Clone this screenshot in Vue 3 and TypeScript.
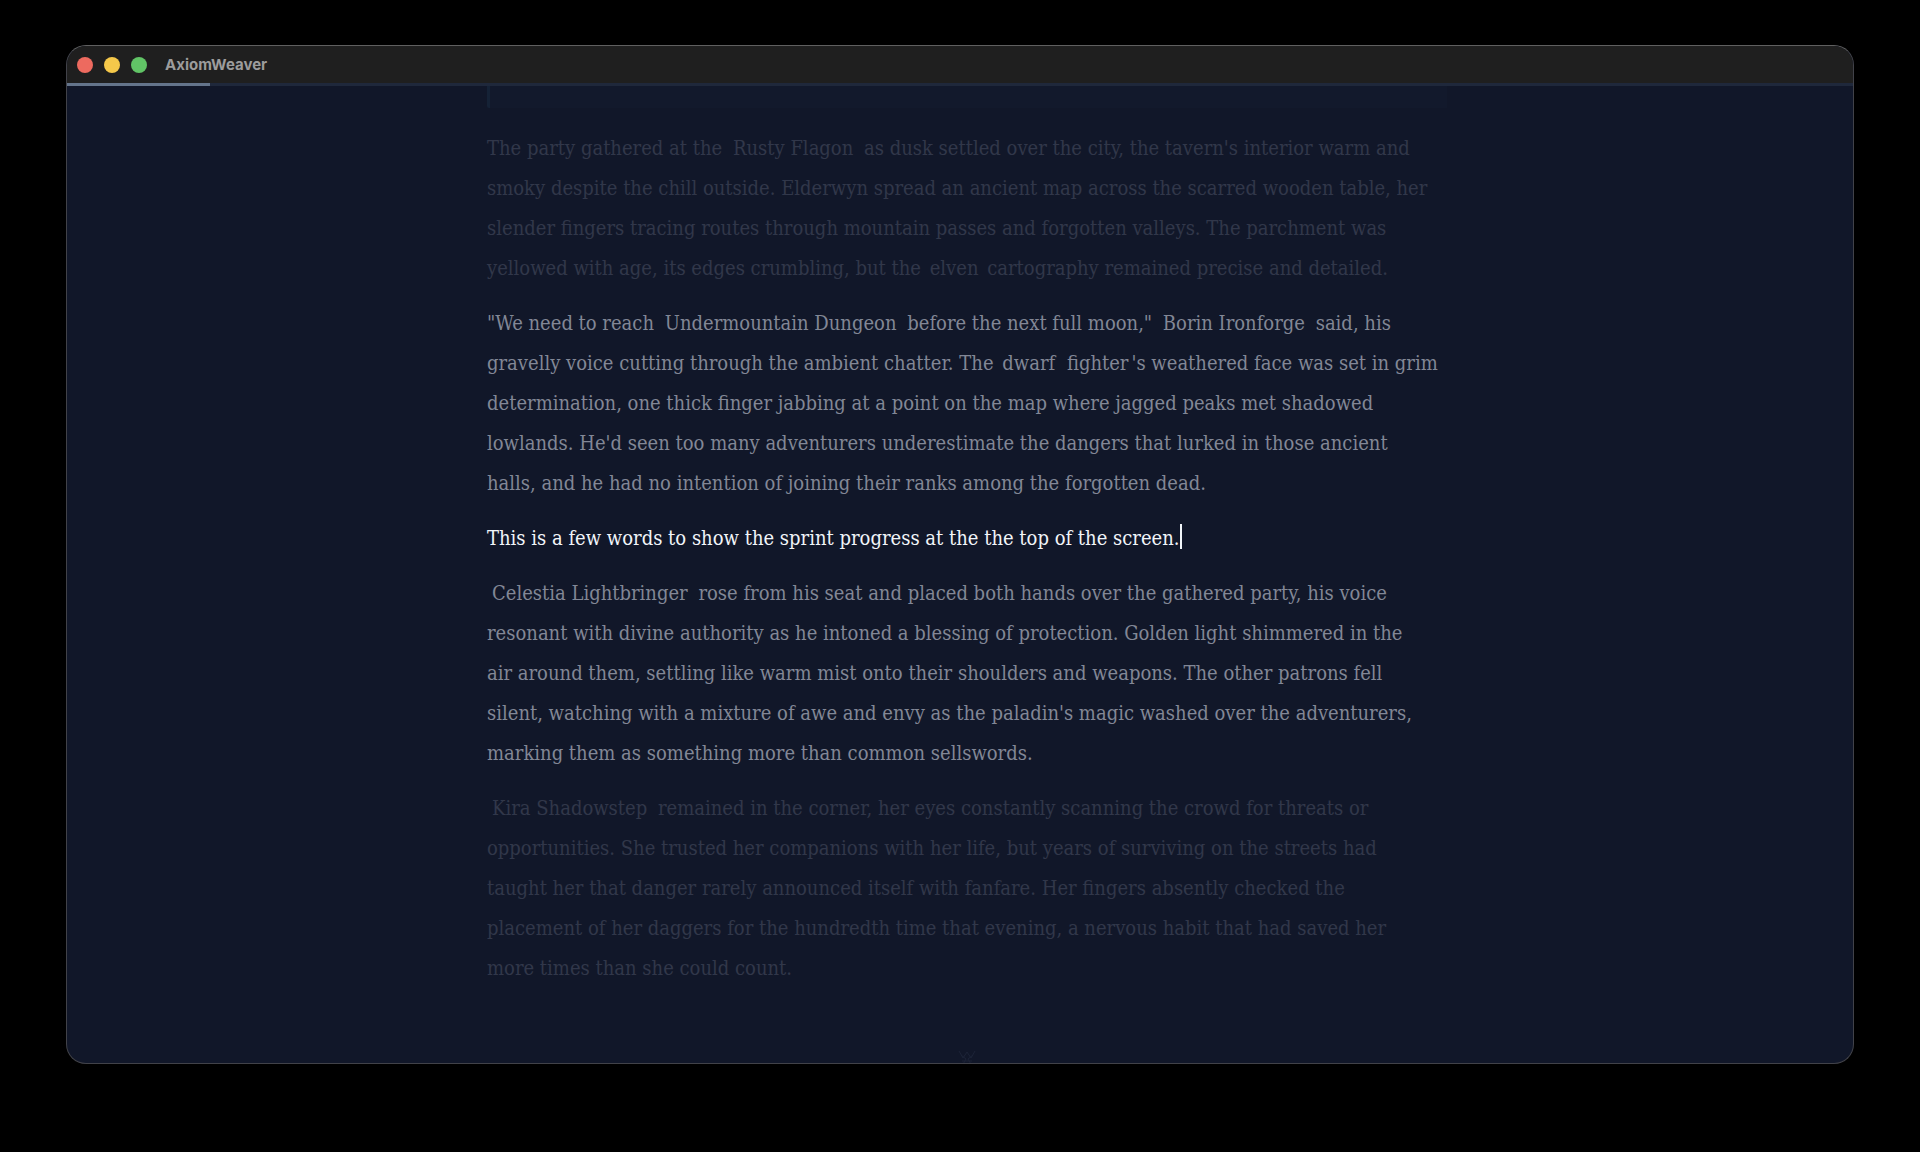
<script setup lang="ts">
type Kind = 'text' | 'name' | 'trait'

interface Segment {
  kind: Kind
  text: string
}

interface Paragraph {
  focus: 'active' | 'near' | 'far'
  lines: Segment[][]
}

// Linked names are written as [[name]], character traits as <<trait>>.
function parse(line: string): Segment[] {
  return line
    .split(/(\[\[.*?\]\]|<<.*?>>)/)
    .filter((part) => part.length > 0)
    .map((part): Segment => {
      if (part.startsWith('[[')) return { kind: 'name', text: part.slice(2, -2) }
      if (part.startsWith('<<')) return { kind: 'trait', text: part.slice(2, -2) }
      return { kind: 'text', text: part }
    })
}

const sprintProgress = 8

const paragraphs: Paragraph[] = [
  {
    focus: 'far',
    lines: [
      "The party gathered at the [[Rusty Flagon]] as dusk settled over the city, the tavern's interior warm and",
      'smoky despite the chill outside. Elderwyn spread an ancient map across the scarred wooden table, her',
      'slender fingers tracing routes through mountain passes and forgotten valleys. The parchment was',
      'yellowed with age, its edges crumbling, but the <<elven>> cartography remained precise and detailed.',
    ].map(parse),
  },
  {
    focus: 'near',
    lines: [
      '"We need to reach [[Undermountain Dungeon]] before the next full moon," [[Borin Ironforge]] said, his',
      "gravelly voice cutting through the ambient chatter. The <<dwarf>> <<fighter>>'s weathered face was set in grim",
      'determination, one thick finger jabbing at a point on the map where jagged peaks met shadowed',
      "lowlands. He'd seen too many adventurers underestimate the dangers that lurked in those ancient",
      'halls, and he had no intention of joining their ranks among the forgotten dead.',
    ].map(parse),
  },
  {
    focus: 'active',
    lines: ['This is a few words to show the sprint progress at the the top of the screen.'].map(parse),
  },
  {
    focus: 'near',
    lines: [
      '[[Celestia Lightbringer]] rose from his seat and placed both hands over the gathered party, his voice',
      'resonant with divine authority as he intoned a blessing of protection. Golden light shimmered in the',
      'air around them, settling like warm mist onto their shoulders and weapons. The other patrons fell',
      "silent, watching with a mixture of awe and envy as the paladin's magic washed over the adventurers,",
      'marking them as something more than common sellswords.',
    ].map(parse),
  },
  {
    focus: 'far',
    lines: [
      '[[Kira Shadowstep]] remained in the corner, her eyes constantly scanning the crowd for threats or',
      'opportunities. She trusted her companions with her life, but years of surviving on the streets had',
      'taught her that danger rarely announced itself with fanfare. Her fingers absently checked the',
      'placement of her daggers for the hundredth time that evening, a nervous habit that had saved her',
      'more times than she could count.',
    ].map(parse),
  },
]
</script>

<template>
  <div class="desktop">
    <div class="window">
      <header class="titlebar">
        <button class="light close" type="button" aria-label="Close"></button>
        <button class="light minimize" type="button" aria-label="Minimize"></button>
        <button class="light zoom" type="button" aria-label="Zoom"></button>
        <h1 class="title">AxiomWeaver</h1>
      </header>
      <div class="workspace">
        <div class="sprint">
          <div class="sprint-fill" :style="{ width: sprintProgress + '%' }"></div>
        </div>
        <main class="page">
          <blockquote class="quote"></blockquote>
          <p v-for="(p, i) in paragraphs" :key="i" class="para" :class="p.focus">
            <span v-for="(line, j) in p.lines" :key="j" class="line"
              ><span v-for="(seg, k) in line" :key="k" :class="seg.kind">{{ seg.text }}</span
              ><span v-if="p.focus === 'active'" class="caret"></span
            ></span>
          </p>
          <svg class="ornament" viewBox="0 0 18 18" aria-hidden="true">
            <path d="M1 1 5 8 9 2 13 8 17 1M3 5l5 4-4 7M15 5l-5 4 4 7M4 11h10" />
          </svg>
        </main>
      </div>
    </div>
  </div>
</template>

<style>
body {
  background: #000;
}
</style>

<style scoped>
.desktop {
  box-sizing: border-box;
  height: 100vh;
  padding: 45px 66px 88px;
  background: #000;
}

.window {
  box-sizing: border-box;
  height: 100%;
  display: flex;
  flex-direction: column;
  overflow: hidden;
  border: 1px solid #414249;
  border-top-color: #606060;
  border-radius: 20px;
  background: #111729;
}

.titlebar {
  flex: none;
  display: flex;
  align-items: center;
  gap: 11px;
  height: 37px;
  padding: 0 10px;
  background: #1f1f1f;
}

.light {
  width: 16px;
  height: 16px;
  padding: 0;
  border: 0;
  border-radius: 50%;
}

.close {
  background: #ed6a5f;
}

.minimize {
  background: #f5c84a;
}

.zoom {
  background: #61c466;
}

.title {
  margin: 0 0 0 7px;
  font: 700 15px/20px Inter, sans-serif;
  color: #9c9c9c;
}

.workspace {
  position: relative;
  flex: 1;
  min-height: 0;
  overflow: hidden;
}

.sprint {
  position: absolute;
  top: 0;
  left: 0;
  right: 0;
  height: 3px;
  background: #1f283b;
}

.sprint-fill {
  height: 100%;
  background: #64748b;
}

.page {
  box-sizing: border-box;
  width: 974px;
  max-width: 100%;
  margin: 0 auto;
  padding-left: 14px;
  font: 20px/40px 'DejaVu Serif Condensed', 'DejaVu Serif', serif;
  color: #f1f5f9;
}

.quote {
  height: 25px;
  margin: 0 0 20px;
  border-left: 3px solid #152236;
  border-bottom-left-radius: 2px;
  background: #12192c;
}

.para {
  margin: 0 0 15px;
}

.near {
  color: #828796;
}

.far {
  color: #31374a;
}

.line {
  display: block;
  white-space: nowrap;
}

.name {
  padding: 0 5px;
}

.trait {
  padding: 0 3px;
}

.caret {
  display: inline-block;
  width: 2px;
  height: 25px;
  vertical-align: -4px;
  background: #f1f5f9;
}

.ornament {
  display: block;
  width: 18px;
  height: 18px;
  margin: 62px auto 0;
  fill: none;
  stroke: #1c2337;
  stroke-width: 1;
}
</style>
